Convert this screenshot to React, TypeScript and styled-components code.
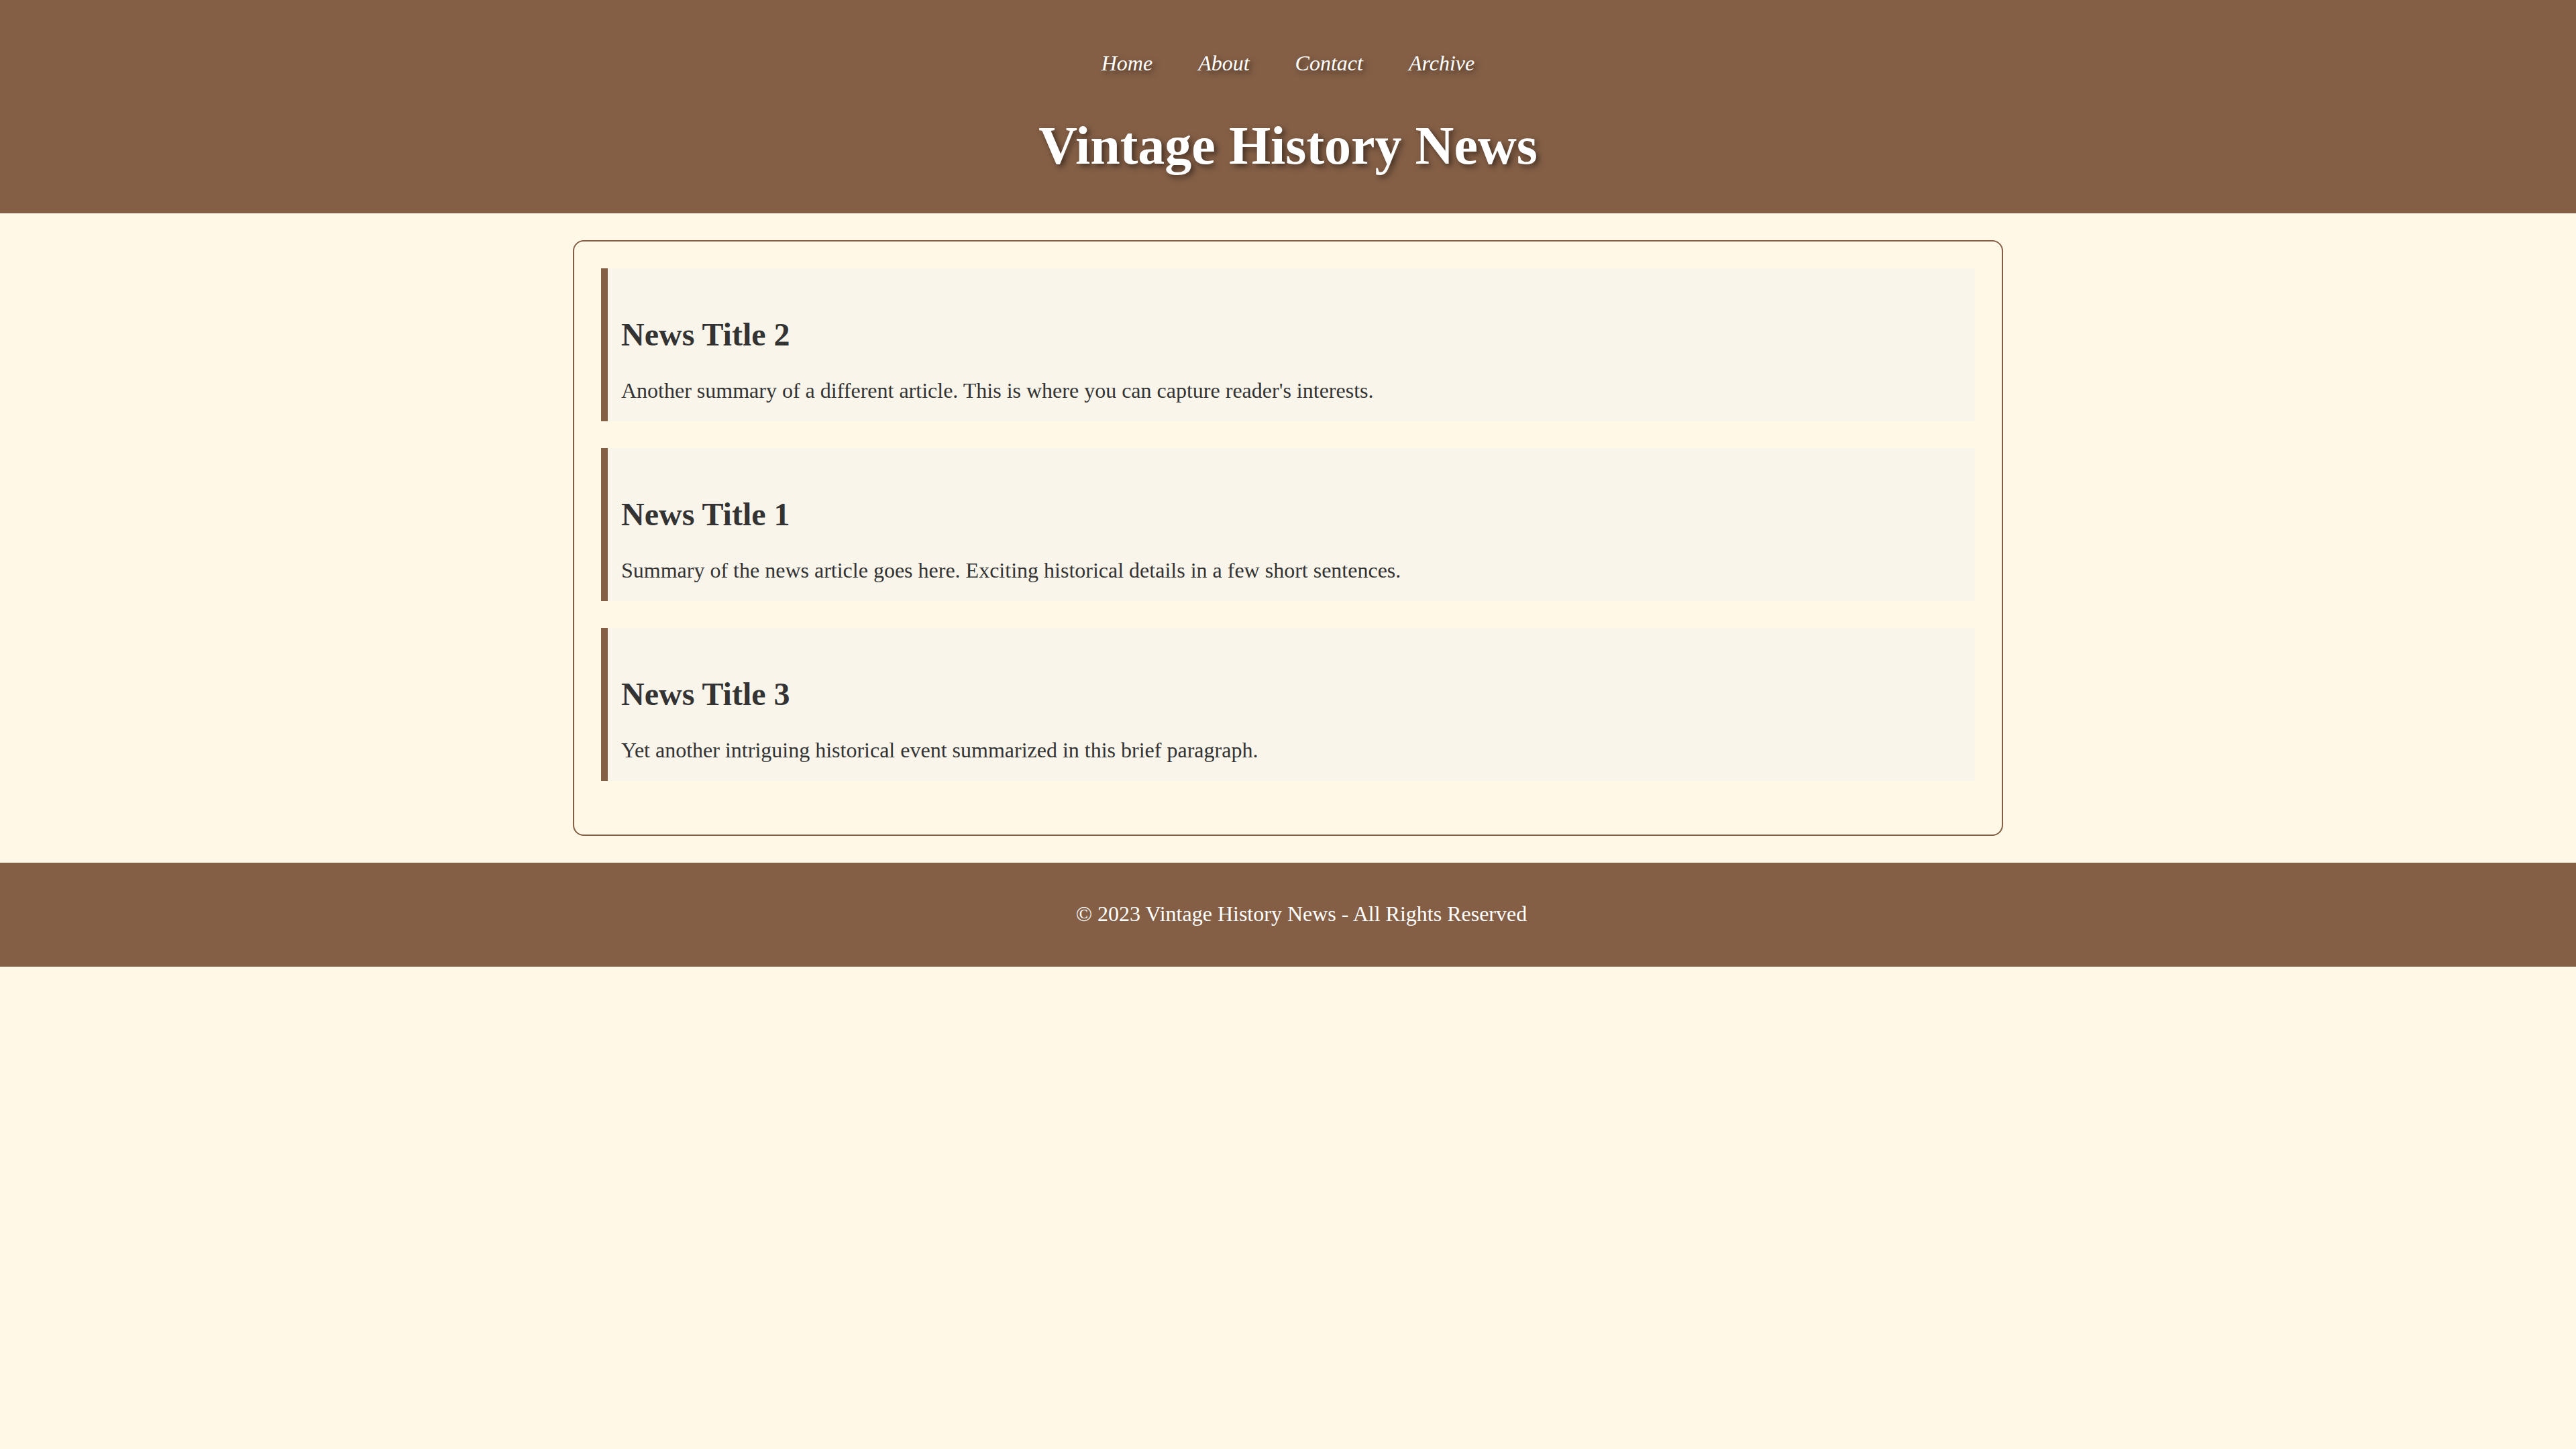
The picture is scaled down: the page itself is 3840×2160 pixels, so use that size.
import React from "react";
import styled, {createGlobalStyle} from "styled-components";

const brown = "#845f46";

const GlobalStyle = createGlobalStyle`
  body {
    margin: 0;
    background-color: #fff8e7;
    font-family: "Liberation Serif", "Times New Roman", serif;
    color: #333;
  }
`;

interface Article {
  id: number;
  title: string;
  summary: string;
}

const articles: Article[] = [
  {
    id: 2,
    title: "News Title 2",
    summary:
      "Another summary of a different article. This is where you can capture reader's interests.",
  },
  {
    id: 1,
    title: "News Title 1",
    summary:
      "Summary of the news article goes here. Exciting historical details in a few short sentences.",
  },
  {
    id: 3,
    title: "News Title 3",
    summary:
      "Yet another intriguing historical event summarized in this brief paragraph.",
  },
];

const links = ["Home", "About", "Contact", "Archive"];

const App = () => {
  return (
    <>
      <GlobalStyle />
      <HeaderStyled>
        <Nav>
          {links.map((link) => (
            <NavLink key={link} href="#">
              {link}
            </NavLink>
          ))}
        </Nav>
        <h1>Vintage History News</h1>
      </HeaderStyled>
      <Container>
        {articles.map((article) => (
          <NewsCard key={article.id}>
            <h2>{article.title}</h2>
            <p>{article.summary}</p>
          </NewsCard>
        ))}
      </Container>
      <Footer>&copy; 2023 Vintage History News - All Rights Reserved</Footer>
    </>
  );
};

export default App;

const HeaderStyled = styled.header`
  background-color: ${brown};
  color: #fff;
  text-align: center;
  padding: 76px 0 55px;

  h1 {
    margin: 58px 0 0;
    font-size: 80px;
    line-height: 92px;
    font-weight: 700;
    text-shadow: 4px 4px 8px rgba(0, 0, 0, 0.5);
  }
`;

const Nav = styled.nav`
  display: flex;
  justify-content: center;
  gap: 68px;
`;

const NavLink = styled.a`
  color: #fff;
  text-decoration: none;
  font-style: italic;
  font-size: 32px;
  line-height: 37px;
  text-shadow: 4px 4px 8px rgba(0, 0, 0, 0.5);
`;

const Container = styled.main`
  width: 2048px;
  margin: 40px auto;
  padding: 40px;
  border: 2px solid ${brown};
  border-radius: 16px;
`;

const NewsCard = styled.article`
  background-color: #f9f5eb;
  border-left: 10px solid ${brown};
  padding: 71px 20px 27px;
  margin-bottom: 40px;

  h2 {
    margin: 0 0 38px;
    font-size: 48px;
    line-height: 55px;
    font-weight: 700;
    color: #333;
  }

  p {
    margin: 0;
    font-size: 32px;
    line-height: 37px;
    color: #333;
  }
`;

const Footer = styled.footer`
  background-color: ${brown};
  color: #fff;
  text-align: center;
  font-size: 32px;
  line-height: 37px;
  padding: 58px 0 60px 40px;
`;
